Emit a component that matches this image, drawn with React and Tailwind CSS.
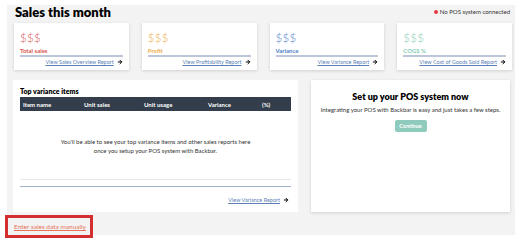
import { ArrowRight } from "lucide-react";

const CARDS = [
  { label: "Total sales", color: "text-[#d9534f]", link: "View Sales Overview Report" },
  { label: "Profit", color: "text-[#f0ad4e]", link: "View Profitability Report" },
  { label: "Variance", color: "text-[#4f7fc9]", link: "View Variance Report" },
  { label: "COGS %", color: "text-[#86ccb8]", link: "View Cost of Goods Sold Report" },
];

function ReportLink({ children }) {
  return (
    <div className="flex items-center justify-end gap-[3px]">
      <span className="text-[5.5px] text-[#5b7fb5] underline">{children}</span>
      <ArrowRight className="w-[6px] h-[6px] text-black" strokeWidth={4} />
    </div>
  );
}

export default function App() {
  return (
    <div className="relative w-[522px] h-[245px] bg-white font-['Lato',sans-serif] overflow-hidden">
      <div className="absolute left-[7px] top-[5px] w-[508px] h-[230px] bg-[#f3f3f3]" />
      <div className="relative pl-[13px] pr-[12px]">
        <div className="flex items-end justify-between h-[19px]">
          <h1 className="text-[13px] font-extrabold text-black leading-none ml-[2px]">
            Sales this month
          </h1>
          <div className="flex items-center gap-[2px] mb-[3px] text-[6px] text-[#333]">
            <span className="w-[4px] h-[4px] rounded-full bg-[#e53945]" />
            No POS system connected
          </div>
        </div>

        <div className="grid grid-cols-4 gap-[13px] mt-[4px] ml-[1px] mr-[-2px]">
          {CARDS.map((c) => (
            <div key={c.label} className="bg-white h-[47px] px-[6px] pt-[9px] shadow-[0_1px_3px_rgba(0,0,0,0.15)]">
              <div className={`text-[11.5px] leading-none font-light tracking-[0.3px] ${c.color}`}>$$$</div>
              <div className={`text-[6px] font-bold leading-none mt-[4px] ${c.color}`}>{c.label}</div>
              <div className="h-[2px] bg-[#bcc6d8] mt-[1px]" />
              <div className="mt-[1px]">
                <ReportLink>{c.link}</ReportLink>
              </div>
            </div>
          ))}
        </div>

        <div className="flex gap-[13px] mt-[10px]">
          <div className="w-[285px] h-[132px] bg-white px-[7px] pt-[8px] flex flex-col">
            <div className="text-[7px] font-extrabold text-black leading-none">Top variance items</div>
            <div className="mt-[2px] h-[14px] bg-[#333d4b] flex items-center text-[6px] font-bold text-white">
              <span className="w-[64px] pl-[3px]">Item name</span>
              <span className="w-[60px]">Unit sales</span>
              <span className="w-[64px]">Unit usage</span>
              <span className="w-[54px]">Variance</span>
              <span>(%)</span>
            </div>
            <div className="mt-[26px] text-center text-[6px] text-[#333] leading-[9px]">
              You'll be able to see your top variance items and other sales reports here
              <br />
              once you setup your POS system with Backbar.
            </div>
            <div className="mt-[24px] h-[1px] bg-[#e8e8e8]" />
            <div className="mt-[6px] h-[1px] bg-[#9fb1cc]" />
            <div className="mt-[9px] pr-[2px]">
              <ReportLink>View Variance Report</ReportLink>
            </div>
          </div>

          <div className="w-[199px] h-[132px] bg-white shadow-[0_1px_3px_rgba(0,0,0,0.15)] flex flex-col items-center pt-[12px]">
            <div className="text-[9px] font-extrabold text-black leading-none">Set up your POS system now</div>
            <div className="mt-[6px] text-[6px] text-[#333] leading-none">
              Integrating your POS with Backbar is easy and just takes a few steps.
            </div>
            <div className="mt-[7px] w-[32px] h-[12px] rounded-[2px] bg-[#8fcbbd] text-white text-[5.5px] font-bold flex items-center justify-center">
              Continue
            </div>
          </div>
        </div>
      </div>

      <div className="absolute left-[5px] top-[215px] w-[88px] h-[23px] border-[3px] border-[#d32f2f] flex items-center pl-[6px]">
        <span className="text-[6.5px] text-[#e8735a] underline">Enter sales data manually</span>
      </div>
    </div>
  );
}
